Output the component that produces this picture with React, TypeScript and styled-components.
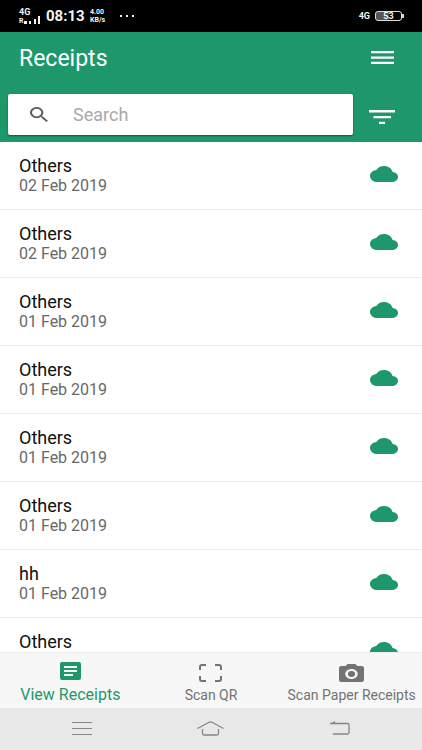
import React from "react";
import styled, { createGlobalStyle } from "styled-components";

const green = "#1e976b";

const GlobalStyle = createGlobalStyle`
  * { box-sizing: border-box; }
  body {
    margin: 0;
    background: #fff;
    font-family: Roboto, "Liberation Sans", sans-serif;
  }
  button, input { font: inherit; }
`;

const Screen = styled.div`
  display: flex;
  flex-direction: column;
  height: 100vh;
  overflow: hidden;
`;

const StatusBar = styled.div`
  display: flex;
  flex: none;
  align-items: center;
  height: 32px;
  padding: 0 18px 0 19px;
  background: #000;
  color: #f4f4f4;
  font-weight: 700;
`;

const Signal = styled.div`
  display: flex;
  flex-direction: column;
  width: 27px;
  font-size: 9px;
  line-height: 10px;
`;

const SignalRow = styled.div`
  display: flex;
  align-items: flex-end;
  font-size: 7px;
  line-height: 8px;
`;

const Bars = styled.span`
  display: flex;
  height: 10px;
  margin-top: -3px;
`;

const Clock = styled.span`
  width: 44px;
  font-size: 15px;
  line-height: 18px;
`;

const Speed = styled.span`
  display: flex;
  flex-direction: column;
  width: 30px;
  font-size: 7px;
  line-height: 8px;
`;

const Network = styled.span`
  margin-left: auto;
  margin-right: 5px;
  font-size: 9px;
  line-height: 10px;
`;

const Battery = styled.span`
  display: flex;
  align-items: center;
`;

const BatteryCell = styled.span`
  width: 27px;
  height: 10px;
  border: 1px solid #ddd;
  border-radius: 3px;
  background: linear-gradient(to right, #555 50%, #000 50%);
  font-size: 9px;
  line-height: 8px;
  text-align: center;
`;

const BatteryTip = styled.span`
  width: 2px;
  height: 4px;
  background: #ddd;
`;

const Header = styled.header`
  flex: none;
  padding-bottom: 7px;
  background: ${green};
  color: #fff;
`;

const HeaderRow = styled.div`
  display: flex;
  align-items: center;
  justify-content: space-between;
  height: 54px;
  padding-left: 19px;
  margin-bottom: 8px;
`;

const Title = styled.h1`
  margin: 0;
  font-size: 23px;
  font-weight: 400;
  line-height: 26px;
`;

const IconButton = styled.button`
  display: flex;
  align-items: center;
  justify-content: center;
  width: 80px;
  height: 40px;
  padding: 0;
  border: 0;
  background: none;
  color: inherit;
`;

const MenuButton = styled(IconButton)`
  padding-bottom: 3px;
`;

const SearchRow = styled.div`
  display: flex;
  align-items: center;
  padding-left: 8px;
`;

const SearchBox = styled.label`
  display: flex;
  flex: 1;
  align-items: center;
  gap: 25px;
  min-width: 0;
  height: 41px;
  padding: 0 16px 0 22px;
  border-radius: 2px;
  background: #fff;
  box-shadow: 0 1px 2px rgba(0, 0, 0, 0.45);
  color: #5d5d5d;
`;

const SearchInput = styled.input`
  flex: 1;
  min-width: 0;
  padding: 0;
  border: 0;
  outline: 0;
  background: none;
  color: #222;
  font-size: 18px;
  line-height: 20px;
  &::placeholder { color: #a9a9a9; opacity: 1; }
`;

const FilterButton = styled(IconButton)`
  width: 69px;
  padding-right: 11px;
  padding-top: 5px;
`;

const List = styled.ul`
  flex: 1;
  min-height: 0;
  margin: 0;
  padding: 0;
  overflow-y: auto;
  scrollbar-width: none;
  list-style: none;
`;

const Row = styled.li`
  display: flex;
  align-items: center;
  justify-content: space-between;
  padding: 14px 24px 14px 19px;
  border-bottom: 1px solid #ececec;
  color: ${green};
`;

const Name = styled.div`
  color: #101010;
  font-size: 18px;
  line-height: 20px;
`;

const DateText = styled.div`
  color: #686868;
  font-size: 16px;
  line-height: 19px;
`;

const Tabs = styled.nav`
  display: grid;
  flex: none;
  grid-template-columns: repeat(3, 1fr);
  height: 56px;
  border-top: 1px solid #ececec;
  background: #f7f7f7;
`;

const Tab = styled.button<{ $active?: boolean }>`
  display: flex;
  flex-direction: column;
  align-items: center;
  justify-content: flex-start;
  gap: ${(p) => (p.$active ? 6 : 4)}px;
  padding: ${(p) => (p.$active ? 9 : 11)}px 0 0;
  border: 0;
  background: none;
  color: ${(p) => (p.$active ? green : "#737373")};
  font-size: ${(p) => (p.$active ? 16 : 14)}px;
  line-height: 18px;
  white-space: nowrap;
`;

const SystemNav = styled.div`
  display: grid;
  flex: none;
  grid-template-columns: repeat(3, 1fr);
  height: 42px;
  padding: 0 18px;
  background: #e8e8e8;
  color: #858585;
`;

const SystemButton = styled(IconButton)`
  width: 100%;
`;

type IconProps = { w: number; h: number; box: string; children: React.ReactNode };

const Icon = ({ w, h, box, children }: IconProps) => (
  <svg width={w} height={h} viewBox={box} preserveAspectRatio="none" fill="currentColor" aria-hidden="true">
    {children}
  </svg>
);

const Cloud = () => (
  <Icon w={28} h={19} box="0 4 24 19">
    <path d="M19.35 10.04C18.67 6.59 15.64 4 12 4 9.11 4 6.6 5.64 5.35 8.04 2.34 8.36 0 10.91 0 14c0 3.31 2.69 6 6 6h13c2.76 0 5-2.24 5-5 0-2.64-2.05-4.78-4.65-4.96z" />
  </Icon>
);

const receipts = [
  { name: "Others", date: "02 Feb 2019" },
  { name: "Others", date: "02 Feb 2019" },
  { name: "Others", date: "01 Feb 2019" },
  { name: "Others", date: "01 Feb 2019" },
  { name: "Others", date: "01 Feb 2019" },
  { name: "Others", date: "01 Feb 2019" },
  { name: "hh", date: "01 Feb 2019" },
  { name: "Others", date: "01 Feb 2019" },
];

export default function App() {
  return (
    <Screen>
      <GlobalStyle />
      <StatusBar>
        <Signal>
          <span>4G</span>
          <SignalRow>
            <span>R</span>
            <Bars>
              <Icon w={18} h={9} box="0 0 18 9">
                <path d="M1 6h3v3H1zM6 6h2v3H6zM11 4h2v5h-2zM15 1h2v8h-2z" />
              </Icon>
            </Bars>
          </SignalRow>
        </Signal>
        <Clock>08:13</Clock>
        <Speed>
          <span>4.00</span>
          <span>KB/s</span>
        </Speed>
        <Icon w={14} h={2} box="0 0 14 2">
          <path d="M0 0h2v2H0zM6 0h2v2H6zM12 0h2v2h-2z" />
        </Icon>
        <Network>4G</Network>
        <Battery>
          <BatteryCell>53</BatteryCell>
          <BatteryTip />
        </Battery>
      </StatusBar>

      <Header>
        <HeaderRow>
          <Title>Receipts</Title>
          <MenuButton aria-label="Menu">
            <Icon w={23} h={13} box="0 0 23 13">
              <path d="M0 0h23v2.3H0zM0 5.400h23v2.300H0zM0 10.700h23V13H0z" />
            </Icon>
          </MenuButton>
        </HeaderRow>
        <SearchRow>
          <SearchBox>
            <Icon w={18} h={15} box="3 3 17.5 17.5">
              <path d="M15.5 14h-.79l-.28-.27C15.41 12.59 16 11.11 16 9.5 16 5.91 13.09 3 9.5 3S3 5.91 3 9.5 5.91 16 9.5 16c1.61 0 3.09-.59 4.23-1.57l.27.28v.79l5 4.99L20.49 19l-4.99-5zm-6 0C7.01 14 5 11.99 5 9.5S7.01 5 9.5 5 14 7.01 14 9.5 11.99 14 9.5 14z" />
            </Icon>
            <SearchInput type="text" placeholder="Search" aria-label="Search" />
          </SearchBox>
          <FilterButton aria-label="Filter">
            <Icon w={26} h={14} box="0 0 26 14">
              <path d="M0 0h26v2.4H0zM4.5 6h17.5v2.2H4.5zM10 11.7h6V14h-6z" />
            </Icon>
          </FilterButton>
        </SearchRow>
      </Header>

      <List>
        {receipts.map((r, i) => (
          <Row key={i}>
            <div>
              <Name>{r.name}</Name>
              <DateText>{r.date}</DateText>
            </div>
            <Cloud />
          </Row>
        ))}
      </List>

      <Tabs>
        <Tab $active>
          <Icon w={21} h={18} box="0 0 21 18">
            <path
              fillRule="evenodd"
              d="M2 0h17a2 2 0 0 1 2 2v14a2 2 0 0 1-2 2H2a2 2 0 0 1-2-2V2a2 2 0 0 1 2-2zM4 4v2h13V4zM4 8v2h13V8zM4 12v2h9v-2z"
            />
          </Icon>
          View Receipts
        </Tab>
        <Tab>
          <Icon w={23} h={18} box="0 0 23 18">
            <path
              d="M1 6V3a2 2 0 0 1 2-2h4M16 1h4a2 2 0 0 1 2 2v3M22 12v3a2 2 0 0 1-2 2h-4M7 17H3a2 2 0 0 1-2-2v-3"
              fill="none"
              stroke="currentColor"
              strokeWidth="2"
            />
          </Icon>
          Scan QR
        </Tab>
        <Tab>
          <Icon w={25} h={18} box="2 2 20 18">
            <path d="M9 2 7.17 4H4c-1.1 0-2 .9-2 2v12c0 1.1.9 2 2 2h16c1.1 0 2-.9 2-2V6c0-1.1-.9-2-2-2h-3.17L15 2H9zm3 15c-2.76 0-5-2.24-5-5s2.24-5 5-5 5 2.24 5 5-2.24 5-5 5z" />
            <circle cx="12" cy="12" r="2.9" />
          </Icon>
          Scan Paper Receipts
        </Tab>
      </Tabs>

      <SystemNav>
        <SystemButton aria-label="Recent apps">
          <Icon w={20} h={13} box="0 0 20 13">
            <path d="M0 .5h20M0 6.5h20M0 12.5h20" stroke="currentColor" fill="none" />
          </Icon>
        </SystemButton>
        <SystemButton aria-label="Home">
          <Icon w={27} h={15} box="0 0 27 15">
            <path
              d="M.5 7.5 12 1.3q1.5-.7 3 0L26.5 7.5M5.5 8v4.5q0 1.5 1.5 1.5h13q1.5 0 1.5-1.5V8"
              stroke="currentColor"
              strokeWidth="1.3"
              fill="none"
            />
          </Icon>
        </SystemButton>
        <SystemButton aria-label="Back">
          <Icon w={20} h={14} box="0 0 20 14">
            <path
              d="M0 2.5h17.5q1.5 0 1.5 1.5v7.5q0 1.5-1.5 1.5H3"
              stroke="currentColor"
              strokeWidth="1.3"
              fill="none"
            />
            <path d="M0 3 5 0v3z" />
          </Icon>
        </SystemButton>
      </SystemNav>
    </Screen>
  );
}
